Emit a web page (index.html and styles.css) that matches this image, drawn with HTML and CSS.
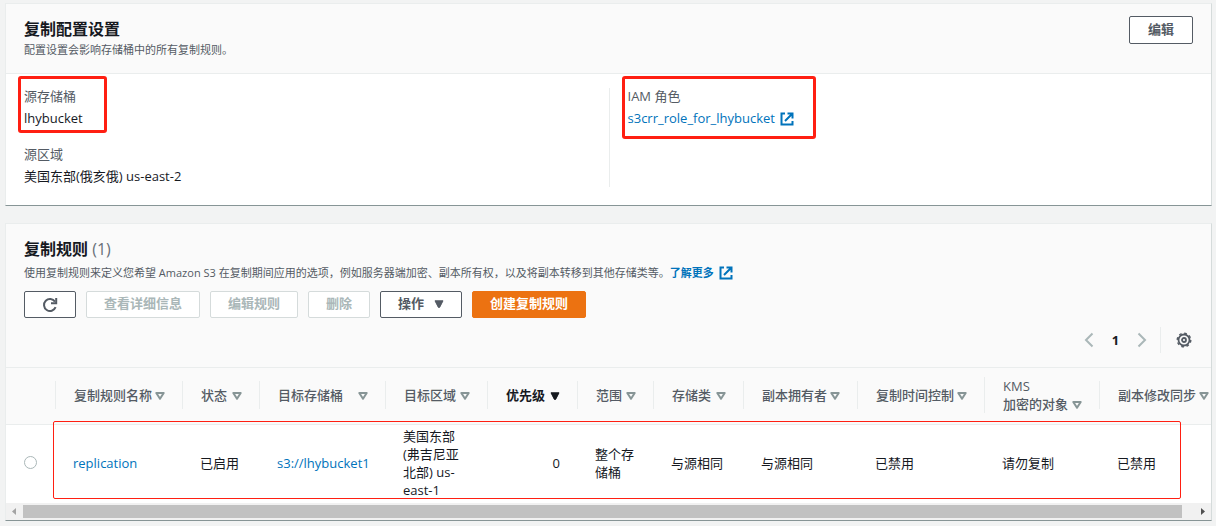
FILE: index.html
```html
<!DOCTYPE html>
<html lang="zh-CN">
<head>
<meta charset="utf-8">
<title>复制规则</title>
<link rel="stylesheet" href="styles.css">
</head>
<body>
<svg class="defs" aria-hidden="true">
  <symbol id="external" viewBox="0 0 14 14"><path d="M5 1.500H1.500v11h11V9M7.500 1.500h5v5M12.500 1.500L5 9" fill="none" stroke="currentColor" stroke-width="2"/></symbol>
  <symbol id="sort" viewBox="0 0 10 8"><path d="M1.300 1h7.400L5 6.800z" fill="none" stroke="currentColor" stroke-width="2" stroke-linejoin="round"/></symbol>
  <symbol id="caret" viewBox="0 0 10 8"><path d="M1 .8h8L5.600 7.400H4.400z" fill="currentColor" stroke="currentColor" stroke-linejoin="round"/></symbol>
</svg>
<main class="page">
  <section class="card">
    <header class="card-head settings-head">
      <div>
        <h2 class="title">复制配置设置</h2>
        <p class="desc">配置设置会影响存储桶中的所有复制规则。</p>
      </div>
      <button class="btn" type="button">编辑</button>
    </header>
    <div class="settings">
      <dl class="fields">
        <div class="field marked bucket-mark"><dt>源存储桶</dt><dd>lhybucket</dd></div>
        <div class="field"><dt>源区域</dt><dd>美国东部(俄亥俄) us-east-2</dd></div>
      </dl>
      <dl class="fields">
        <div class="field marked role-mark"><dt>IAM 角色</dt><dd><a href="#">s3crr_role_for_lhybucket<svg class="ext"><use href="#external"/></svg></a></dd></div>
      </dl>
    </div>
  </section>

  <section class="card">
    <header class="card-head rules-head">
      <h2 class="title">复制规则 <span class="count">(1)</span></h2>
      <p class="desc">使用复制规则来定义您希望 Amazon S3 在复制期间应用的选项，例如服务器端加密、副本所有权，以及将副本转移到其他存储类等。<a class="more" href="#">了解更多<svg class="ext"><use href="#external"/></svg></a></p>
      <div class="actions">
        <button class="btn" type="button" aria-label="刷新"><svg class="refresh" viewBox="0 0 16 16"><path d="M13.600 10.200A6 6 0 1 1 13 4.600" fill="none" stroke="currentColor" stroke-width="2"/><path d="M14.200 1v5.200H9" fill="none" stroke="currentColor" stroke-width="2"/></svg></button>
        <button class="btn" type="button" disabled>查看详细信息</button>
        <button class="btn" type="button" disabled>编辑规则</button>
        <button class="btn" type="button" disabled>删除</button>
        <button class="btn menu" type="button">操作<svg class="tri"><use href="#caret"/></svg></button>
        <button class="btn primary" type="button">创建复制规则</button>
      </div>
      <nav class="pager" aria-label="分页">
        <button class="icon-btn" type="button" aria-label="上一页"><svg class="chev" viewBox="0 0 10 16"><path d="M8.500 1.500L2 8l6.500 6.500" fill="none" stroke="currentColor" stroke-width="2"/></svg></button>
        <span class="page-no">1</span>
        <button class="icon-btn" type="button" aria-label="下一页"><svg class="chev" viewBox="0 0 10 16"><path d="M1.500 1.500L8 8l-6.500 6.500" fill="none" stroke="currentColor" stroke-width="2"/></svg></button>
        <button class="icon-btn prefs" type="button" aria-label="首选项"><svg class="gear" viewBox="0 0 16 16" fill="none" stroke="currentColor"><circle cx="8" cy="8" r="5.500" stroke-width="1.800"/><circle cx="8" cy="8" r="6.800" stroke-width="1.400" stroke-dasharray="2.670 2.670"/><circle cx="8" cy="8" r="2" stroke-width="1.800"/></svg></button>
      </nav>
    </header>
    <div class="table-wrap">
      <table class="rules">
        <colgroup><col class="w49"><col class="w127"><col class="w77"><col class="w126"><col class="w102"><col class="w90"><col class="w76"><col class="w90"><col class="w114"><col class="w127"><col class="w115"><col class="w127"></colgroup>
        <thead>
          <tr>
            <td></td>
            <th><div class="th">复制规则名称<svg class="tri"><use href="#sort"/></svg></div></th>
            <th><div class="th">状态<svg class="tri"><use href="#sort"/></svg></div></th>
            <th><div class="th">目标存储桶<svg class="tri"><use href="#sort"/></svg></div></th>
            <th><div class="th">目标区域<svg class="tri"><use href="#sort"/></svg></div></th>
            <th class="sorted"><div class="th">优先级<svg class="tri"><use href="#caret"/></svg></div></th>
            <th><div class="th">范围<svg class="tri"><use href="#sort"/></svg></div></th>
            <th><div class="th">存储类<svg class="tri"><use href="#sort"/></svg></div></th>
            <th><div class="th">副本拥有者<svg class="tri"><use href="#sort"/></svg></div></th>
            <th><div class="th">复制时间控制<svg class="tri"><use href="#sort"/></svg></div></th>
            <th><div class="th"><span>KMS<br>加密的对象</span><svg class="tri"><use href="#sort"/></svg></div></th>
            <th><div class="th">副本修改同步<svg class="tri"><use href="#sort"/></svg></div></th>
          </tr>
        </thead>
        <tbody>
          <tr>
            <td><input class="pick" type="radio" name="rule" aria-label="选择 replication"></td>
            <td><a href="#">replication</a></td>
            <td>已启用</td>
            <td><a href="#">s3://lhybucket1</a></td>
            <td>美国东部(弗吉尼亚北部) us-east-1</td>
            <td class="num">0</td>
            <td>整个存储桶</td>
            <td>与源相同</td>
            <td>与源相同</td>
            <td>已禁用</td>
            <td>请勿复制</td>
            <td>已禁用</td>
          </tr>
        </tbody>
      </table>
      <div class="row-mark"></div>
    </div>
    <div class="scrollbar" aria-hidden="true">
      <svg class="arrow dim" viewBox="0 0 17 17"><path d="M10 5v7L6 8.500z" fill="currentColor"/></svg>
      <div class="track"><div class="thumb"></div></div>
      <svg class="arrow" viewBox="0 0 17 17"><path d="M7 5v7l4-3.500z" fill="currentColor"/></svg>
    </div>
  </section>
</main>
</body>
</html>
```
FILE: styles.css
```css
*, *::after { box-sizing: border-box; }

body {
  margin: 0;
  background: #f2f3f3;
  color: #16191f;
  font: 13px/18px "Open Sans", "Noto Sans CJK SC", sans-serif;
}

h2, p, dl, dd { margin: 0; }
a { color: #0073bb; text-decoration: none; }
.defs { position: absolute; width: 0; height: 0; }

.page {
  display: flex;
  flex-direction: column;
  gap: 17px;
  padding: 3px 4px 5px 5px;
}

.card {
  background: #fff;
  border: 1px solid #eaeded;
  border-right-color: #d5dbdb;
  border-bottom-color: #879596;
}

.card-head {
  padding: 12px 18px;
  background: #fafafa;
  border-bottom: 1px solid #eaeded;
}
.settings-head {
  display: flex;
  justify-content: space-between;
  align-items: flex-start;
  padding-bottom: 16px;
}
.title { font-size: 16px; line-height: 26px; font-weight: 700; }
.count { color: #687078; font-weight: 400; }
.desc { color: #545b64; font-size: 11px; line-height: 15px; }
.more { font-weight: 700; }
.ext { width: 14px; height: 14px; margin-left: 5px; vertical-align: -3px; }

.btn {
  min-height: 27px;
  padding: 0 17px 3px;
  border: 1px solid #545b64;
  border-radius: 2px;
  background: #fff;
  color: #545b64;
  font: 700 13px/18px "Open Sans", "Noto Sans CJK SC", sans-serif;
}
.settings-head .btn { min-height: 28px; padding: 0 18px 3px; }
.btn:disabled { border-color: #d5dbdb; color: #aab7b8; }
.btn.primary { border-color: #ec7211; background: #ec7211; color: #fff; }
.menu .tri { margin-left: 10px; }
.btn[aria-label] { padding-bottom: 0; }
.refresh { display: block; width: 16px; height: 16px; }

.settings {
  display: grid;
  grid-template-columns: 1fr 1fr;
  padding: 14px 0 18px;
}
.fields {
  display: flex;
  flex-direction: column;
  gap: 18px;
  padding: 0 18px;
}
.fields + .fields { border-left: 1px solid #eaeded; }
.field dt { color: #545b64; line-height: 16px; }
.field dd { margin-top: 4px; line-height: 20px; }
.field:last-child:not(.marked) { padding-bottom: 1px; }

/* Highlight frames lie over the content they point to. */
.marked { position: relative; }
.marked::after {
  content: "";
  position: absolute;
  top: -12px;
  left: -6px;
  border: 3px solid #ff1f12;
  border-radius: 3px;
  pointer-events: none;
}
.bucket-mark::after { width: 89px; height: 57px; }
.role-mark::after { width: 194px; height: 63px; }

.rules-head { padding-bottom: 14px; }
.rules-head .desc { margin-top: 3px; }
.actions { display: flex; gap: 10px; margin-top: 11px; }

.pager {
  display: flex;
  justify-content: flex-end;
  align-items: center;
  margin-top: 9px;
}
.icon-btn {
  display: flex;
  padding: 0;
  border: 0;
  background: none;
  color: #aab7b8;
}
.chev { width: 10px; height: 16px; }
.page-no { width: 43px; text-align: center; font-weight: 700; }
.prefs {
  align-items: center;
  height: 26px;
  margin-left: 13px;
  padding: 0 1px 0 15px;
  border-left: 1px solid #eaeded;
  color: #545b64;
}
.gear { width: 16px; height: 16px; }

.table-wrap { position: relative; overflow: hidden; }
.rules {
  width: 100%;
  min-width: 1220px;
  table-layout: fixed;
  border-collapse: collapse;
}
.w49 { width: 49px; }
.w76 { width: 76px; }
.w77 { width: 77px; }
.w90 { width: 90px; }
.w102 { width: 102px; }
.w114 { width: 114px; }
.w115 { width: 115px; }
.w126 { width: 126px; }
.w127 { width: 127px; }

.rules thead { background: #fafafa; border-bottom: 1px solid #eaeded; }
.rules th { height: 56px; padding: 0 0 2px; color: #545b64; font-weight: 500; text-align: left; }
.rules .sorted { color: #16191f; font-weight: 700; }
.th {
  display: flex;
  justify-content: space-between;
  align-items: center;
  min-height: 28px;
  padding: 0 17px 0 18px;
  border-left: 1px solid #eaeded;
  white-space: nowrap;
}
.th:has(br) { align-items: flex-end; }
.th:has(br) .tri { margin-bottom: 4px; }
.tri { width: 10px; height: 8px; flex: none; }
.th .tri { color: #879596; }
.th .tri { margin-top: 2px; }
.sorted .tri { color: #16191f; }

.rules tbody td { height: 79px; padding: 0 17px 2px 18px; vertical-align: middle; }
.rules .num { text-align: right; }
.pick {
  display: block;
  appearance: none;
  width: 13px;
  height: 13px;
  margin: 0;
  border: 1px solid #aab7b8;
  border-radius: 50%;
  background: #fff;
}
.row-mark {
  position: absolute;
  inset: auto 30px 4px 47px;
  height: 78px;
  border: 1px solid #ff1f12;
  border-radius: 2px;
  pointer-events: none;
}

.scrollbar { display: flex; height: 17px; background: #f1f1f1; }
.arrow { width: 17px; height: 17px; flex: none; color: #505050; }
.dim { color: #a3a3a3; }
.track { flex: 1; padding: 2px 0; }
.thumb { width: 99%; height: 13px; background: #c1c1c1; }
```
